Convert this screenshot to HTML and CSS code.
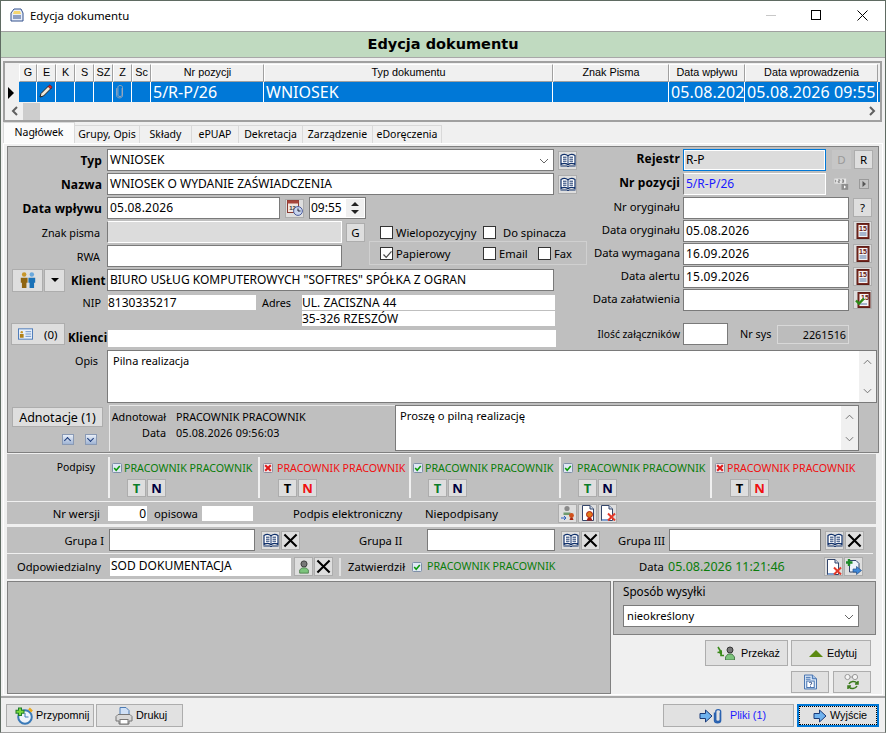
FILE: index.html
```html
<!DOCTYPE html>
<html lang="pl">
<head>
<meta charset="utf-8">
<title>Edycja dokumentu</title>
<link rel="stylesheet" href="styles.css">
</head>
<body>
<svg class="defs" width="0" height="0" aria-hidden="true">
  <symbol id="book" viewBox="0 0 16 16"><path d="M1 12.5V3.5C3 2.2 6 2.2 8 3.8C10 2.2 13 2.2 15 3.5V12.5C13 11.3 10 11.3 8 12.8C6 11.3 3 11.3 1 12.5Z" fill="#fff" stroke="#10306a" stroke-width="1.2"/><path d="M8 4V12.6M3 5.2H6.5M3 7.2H6.5M3 9.2H6.5M9.5 5.2H13M9.5 7.2H13M9.5 9.2H13" stroke="#10306a" fill="none"/><path d="M0.5 14H7L8 14.8L9 14H15.5" stroke="#10306a" fill="none"/></symbol>
  <symbol id="x" viewBox="0 0 16 16"><path d="M1.5 1.5L14.5 14.5M14.5 1.5L1.5 14.5" stroke="#000" stroke-width="2.2" fill="none"/></symbol>
  <symbol id="people" viewBox="0 0 16 16"><circle cx="4.6" cy="3" r="2" fill="#c8962a"/><path d="M1.6 6H7.6V10.5H6.6V15H2.6V10.5H1.6Z" fill="#8f6512"/><circle cx="11.4" cy="3" r="2" fill="#6aa8dc"/><path d="M8.4 6H14.4V10.5H13.4V15H9.4V10.5H8.4Z" fill="#1a72b8"/></symbol>
  <symbol id="card" viewBox="0 0 16 12"><rect x="0.5" y="0.5" width="15" height="11" fill="#e8f0fa" stroke="#4878b8"/><circle cx="4" cy="4" r="1.3" fill="#c8962a"/><path d="M2 10V6H6V10Z" fill="#b08018"/><path d="M8 3.5H14M8 6H14M8 8.5H14" stroke="#6a90c8"/></symbol>
  <symbol id="num" viewBox="0 0 18 14"><rect x="0.5" y="0.5" width="14" height="6" fill="#e8e8e8"/><path d="M2 2V5M5 2H7V3.5H5V5H7M9.5 2H11.5V5H9.5M9.5 3.5H11.5" stroke="#777" fill="none"/><rect x="9" y="7" width="8" height="7" fill="#8f8f8f"/><path d="M12 8.5L14.5 10.5L12 12.5Z" fill="#fff"/></symbol>
  <symbol id="next" viewBox="0 0 12 12"><rect x="1" y="1" width="10" height="10" fill="#9a9a9a"/><rect x="2" y="2" width="8" height="8" fill="#c4c4c4"/><path d="M4.5 3L8 6L4.5 9Z" fill="#555"/></symbol>
  <symbol id="sok" viewBox="0 0 10 10"><rect x="0.5" y="0.5" width="9" height="9" rx="1" fill="#dfe8f4" stroke="#7e8fa8"/><path d="M2.2 5L4.2 7.2L7.8 3" stroke="#0a9a0a" stroke-width="1.6" fill="none"/></symbol>
  <symbol id="sno" viewBox="0 0 10 10"><rect x="0.5" y="0.5" width="9" height="9" rx="1" fill="#f2e4e4" stroke="#8e8fa0"/><path d="M2.2 2.2L7.8 7.8M7.8 2.2L2.2 7.8" stroke="#e01818" stroke-width="2" fill="none"/></symbol>
  <symbol id="cert1" viewBox="0 0 16 16"><circle cx="7" cy="3.5" r="2.6" fill="#8a8a8a"/><path d="M3.5 10V7.5H10.5V10Z" fill="#6f9a6f"/><path d="M1 13H6M4 11L6 13L4 15" stroke="#2a5fc0" fill="none"/><circle cx="11.5" cy="10.5" r="2.4" fill="#d0501a"/><path d="M9.5 15L10.5 12.5H12.5L13.5 15Z" fill="#a82810"/></symbol>
  <symbol id="cert2" viewBox="0 0 16 16"><path d="M2.5 0.5H10L13.5 4V15.5H2.5Z" fill="#fff" stroke="#33456a"/><path d="M10 0.5V4H13.5" fill="#cfd8ea" stroke="#33456a"/><circle cx="9.5" cy="9.5" r="3" fill="#e07a18" stroke="#b01c10"/><path d="M6.5 15.5L8 12.5H11L12.5 15.5Z" fill="#b01c10"/></symbol>
  <symbol id="docx" viewBox="0 0 16 16"><path d="M1.5 0.5H9L12.5 4V15.5H1.5Z" fill="#fff" stroke="#33456a"/><path d="M9 0.5V4H12.5" fill="#cfd8ea" stroke="#33456a"/><path d="M2 15H9" stroke="#7ea0d0" stroke-width="2"/><path d="M8 8.5L15 15.5M15 8.5L8 15.5" stroke="#e43a2a" stroke-width="2" fill="none"/></symbol>
  <symbol id="docplus" viewBox="0 0 16 16"><path d="M3.5 1.5H10L13 4.5V13H3.5Z" fill="#eef3fb" stroke="#33456a"/><path d="M3 0V7M0 3.5H6.5" stroke="#1e8a2a" stroke-width="2.4"/><path d="M7 10H10.5V7.5L15.5 11.5L10.5 15.5V13H7Z" fill="#3f88d8" stroke="#24508a" stroke-width="0.7"/></symbol>
  <symbol id="user" viewBox="0 0 16 16"><circle cx="8" cy="4.5" r="3.5" fill="#777" stroke="#333"/><path d="M3 15V11.5L5.5 9H10.5L13 11.5V15Z" fill="#7cc47c" stroke="#3a6a3a" stroke-width="0.8"/></symbol>
  <symbol id="pass" viewBox="0 0 22 14"><path d="M2 1L5 6L1.5 6.5M5 6V9.5H8" stroke="#3a8a1a" stroke-width="1.6" fill="none"/><path d="M6 9L2 6.5L6 4Z" fill="#3a8a1a"/><circle cx="14" cy="4" r="3" fill="#777" stroke="#333"/><path d="M9.5 14V11L12 8H16L18.5 11V14Z" fill="#7cc47c" stroke="#3a6a3a" stroke-width="0.8"/></symbol>
  <symbol id="help" viewBox="0 0 14 16"><path d="M0.5 0.5H9L13.5 4.5V15.5H0.5Z" fill="#dbe8f8" stroke="#3a6aaa"/><path d="M9 0.5V4.5H13.5" fill="#a8c4e8" stroke="#3a6aaa"/><path d="M2 3H7M2 5H7" stroke="#3a6aaa"/><rect x="3" y="7" width="8" height="7" fill="#fff" stroke="#3a6aaa"/><path d="M5.5 9C5.5 8 8.5 8 8.5 9.2C8.5 10.2 7 10.2 7 11.2M7 12V13" stroke="#1a3a7a" fill="none"/></symbol>
  <symbol id="glass" viewBox="0 0 16 16"><circle cx="3.5" cy="3" r="2.6" fill="#f4f4f4" stroke="#999"/><circle cx="11" cy="3" r="2.6" fill="#f4f4f4" stroke="#999"/><path d="M6 3H8.5" stroke="#999"/><path d="M5 10C6 7 11 6.5 13 9M14 7V10H11" stroke="#3a7a1a" stroke-width="1.5" fill="none"/><path d="M13 12C11.5 15 7 15.5 5 13M4 15V12H7" stroke="#3a7a1a" stroke-width="1.5" fill="none"/></symbol>
  <symbol id="alarm" viewBox="0 0 18 18"><circle cx="10" cy="10" r="6.8" fill="#eef3fa" stroke="#3a7ab8" stroke-width="2"/><path d="M10 6V10H13.5" stroke="#3a7ab8" fill="none"/><path d="M14 1.5L17 4.5" stroke="#e8a820" stroke-width="2.5"/><path d="M5 0.5V9M0.5 4.8H9.5" stroke="#1e7e2a" stroke-width="4"/><path d="M5 1.5V8M1.5 4.8H8.5" stroke="#7cd83c" stroke-width="2"/></symbol>
  <symbol id="printer" viewBox="0 0 18 18"><path d="M5 0.5H11L14 3.5V8H5Z" fill="#cfe0f6" stroke="#4e7cb4"/><path d="M1 14V9.5L3 7.5H15L17 9.5V14H14V17H4V14Z" fill="#d8d8d8" stroke="#777"/><rect x="5" y="12.5" width="8" height="4.5" fill="#fff" stroke="#777"/></symbol>
  <symbol id="arrow" viewBox="0 0 14 14"><path d="M1 4.5H6.5V1L13 7L6.5 13V9.5H1Z" fill="#6fb2ee" stroke="#1a3a78"/></symbol>
  <symbol id="clip" viewBox="0 0 10 18"><path d="M7.5 5V13.5C7.5 15.5 2.5 15.5 2.5 13.5V4C2.5 1 8 1 8 4V14C8 17.5 1 17.5 1 14V5" stroke="#2a62b0" stroke-width="1.5" fill="none"/></symbol>
  <symbol id="tick" viewBox="0 0 13 13"><path d="M2.5 6.5L5.2 9.4L10.5 3.4" stroke="#4a4a4a" stroke-width="1.2" fill="none"/></symbol>
  <symbol id="chev" viewBox="0 0 10 6"><path d="M1 1L5 5L9 1" stroke="#666" fill="none"/></symbol>
  <symbol id="sbl" viewBox="0 0 8 10"><path d="M6 1L2 5L6 9" stroke="#606060" stroke-width="2" fill="none"/></symbol>
  <symbol id="sbr" viewBox="0 0 8 10"><path d="M2 1L6 5L2 9" stroke="#606060" stroke-width="2" fill="none"/></symbol>
</svg>

<div class="window">
  <header class="titlebar">
    <svg class="app-icon" viewBox="0 0 14 14"><path d="M1 5L4 1H11L13 5V13H1Z" fill="#e8eefa" stroke="#32508c"/><path d="M4 3H10L11 6H3Z" fill="#f5d670"/><path d="M3 8H11M3 10H11" stroke="#32508c"/></svg>
    <span class="app-title">Edycja dokumentu</span>
    <span class="win-min"></span>
    <span class="win-max"></span>
    <svg class="win-close" viewBox="0 0 11 11"><path d="M0.5 0.5L10.5 10.5M10.5 0.5L0.5 10.5" stroke="#000" fill="none"/></svg>
  </header>

  <h1 class="banner">Edycja dokumentu</h1>

  <section class="grid">
    <div class="grow ghead">
      <span class="corner"></span><span>G</span><span>E</span><span>K</span><span>S</span><span>SZ</span><span>Z</span><span>Sc</span><span>Nr pozycji</span><span>Typ dokumentu</span><span>Znak Pisma</span><span>Data wpływu</span><span>Data wprowadzenia</span>
    </div>
    <div class="grow gdata">
      <span class="gmark"><i class="gtri"></i></span><span></span>
      <span class="gicon"><svg class="ic14" viewBox="0 0 14 14"><path d="M1 13L2 9.5L9.5 2L12 4.5L4.5 12Z" fill="#f0e8d8" stroke="#222"/><path d="M9 2.5L11 0.8L13.2 3L11.5 5Z" fill="#e02020" stroke="#601010" stroke-width="0.6"/></svg></span>
      <span></span><span></span><span></span>
      <span class="gicon"><svg class="ic-clip" viewBox="0 0 10 18"><path d="M7.5 5V13.5C7.5 15.5 2.5 15.5 2.5 13.5V4C2.5 1 8 1 8 4V14C8 17.5 1 17.5 1 14V5" stroke="#98a8bc" stroke-width="1.2" fill="none"/></svg></span>
      <span></span><span>5/R-P/26</span><span>WNIOSEK</span><span></span><span class="clip-cell">05.08.2026</span><span class="clip-cell">05.08.2026 09:55</span>
    </div>
    <div class="gscroll">
      <svg class="sb-l"><use href="#sbl"/></svg><span class="sb-thumb"></span><svg class="sb-r"><use href="#sbr"/></svg>
    </div>
  </section>

  <nav class="tabs">
    <span class="tab tab-active">Nagłówek</span><span class="tab t65">Grupy, Opis</span><span class="tab t52">Składy</span><span class="tab t47">ePUAP</span><span class="tab t64">Dekretacja</span><span class="tab t70">Zarządzenie</span><span class="tab t69">eDoręczenia</span>
  </nav>

  <main class="page">
    <section class="top">
      <div class="left">
        <div class="row">
          <label class="lab b">Typ</label>
          <div class="fld w447">WNIOSEK<svg class="chev" viewBox="0 0 10 6"><use href="#chev"/></svg></div>
          <button class="tb ml4"><svg class="ic16"><use href="#book"/></svg></button>
        </div>
        <div class="row">
          <label class="lab b">Nazwa</label>
          <div class="fld w447">WNIOSEK O WYDANIE ZAŚWIADCZENIA</div>
          <button class="tb ml4"><svg class="ic16"><use href="#book"/></svg></button>
        </div>
        <div class="row">
          <label class="lab b">Data wpływu</label>
          <div class="fld w173 dt">05.08.2026</div>
          <button class="tb ml5"><svg class="ic16" viewBox="0 0 16 16"><rect x="0.5" y="0.5" width="11" height="12" fill="#f2e6e0" stroke="#8a3a32"/><rect x="0.5" y="0.5" width="11" height="3" fill="#a8443a"/><text x="5.5" y="10" font-size="6" font-weight="700" text-anchor="middle" fill="#333" font-family="Liberation Sans">12</text><circle cx="11" cy="11" r="4.4" fill="#c8d4ee" stroke="#4a5a9a"/><path d="M11 8.5V11H13.5" stroke="#223" fill="none"/></svg></button>
          <div class="fld time ml5">09:55<span class="spin"><i class="up"></i><i class="down"></i></span></div>
        </div>
        <div class="row">
          <label class="lab">Znak pisma</label>
          <div class="fld ro w235"></div>
          <button class="tb ml4">G</button>
          <span class="cb ml15"></span><span class="cbt w87">Wielopozycyjny</span>
          <span class="cb"></span><span class="cbt ml7">Do spinacza</span>
        </div>
        <div class="row">
          <label class="lab">RWA</label>
          <div class="fld w235"></div>
          <div class="gbox">
            <span class="cb"><svg class="ic13"><use href="#tick"/></svg></span><span class="cbt w87">Papierowy</span>
            <span class="cb"></span><span class="cbt w39">Email</span>
            <span class="cb"></span><span class="cbt">Fax</span>
          </div>
        </div>
        <div class="row">
          <div class="lead">
            <button class="tb tb-people"><svg class="ic18"><use href="#people"/></svg></button>
            <button class="tb tb-drop"><i class="drop"></i></button>
            <label class="b lead-lab">Klient</label>
          </div>
          <div class="fld w447">BIURO USŁUG KOMPUTEROWYCH "SOFTRES" SPÓŁKA Z OGRAN</div>
        </div>
        <div class="row flat r1">
          <label class="lab lab-nip">NIP</label>
          <div class="val w148">8130335217</div>
          <label class="adres">Adres</label>
          <div class="val w253">UL. ZACISZNA 44</div>
        </div>
        <div class="row flat r2">
          <div class="val w253 addr2">35-326 RZESZÓW</div>
        </div>
        <div class="row flat r3">
          <div class="lead">
            <button class="tb tb-card"><svg class="ic-card"><use href="#card"/></svg><span>(0)</span></button>
            <label class="b lead-lab2">Klienci</label>
          </div>
          <div class="val w448 k"></div>
        </div>
      </div>
      <div class="right">
        <div class="rrow h24"><label class="rlab b">Rejestr</label><div class="fld ro focus w143">R-P</div><button class="tb ml6 dim">D</button><button class="tb ml3">R</button></div>
        <div class="rrow h24"><label class="rlab b">Nr pozycji</label><div class="fld ro w143 blue">5/R-P/26</div><button class="tb ml6 plain"><svg class="ic-num"><use href="#num"/></svg></button><button class="tb ml3 plain"><svg class="ic12"><use href="#next"/></svg></button></div>
        <div class="rrow h23"><label class="rlab">Nr oryginału</label><div class="fld w166"></div><button class="tb ml4">?</button></div>
        <div class="rrow h23"><label class="rlab">Data oryginału</label><div class="fld w166 dt">05.08.2026</div><button class="tb ml4"><svg class="ic16" viewBox="0 0 16 16"><rect x="2" y="0.5" width="12" height="15" fill="#7a2a22" stroke="#5c1c16"/><rect x="3.5" y="2" width="9" height="12" fill="#f4f4f4"/><text x="8" y="8" font-size="7" font-weight="700" text-anchor="middle" fill="#6a1a14" font-family="Liberation Sans">15</text><path d="M4.5 10H11.5M4.5 12H11.5" stroke="#5878a8"/></svg></button></div>
        <div class="rrow h23"><label class="rlab">Data wymagana</label><div class="fld w166 dt">16.09.2026</div><button class="tb ml4"><svg class="ic16" viewBox="0 0 16 16"><rect x="2" y="0.5" width="12" height="15" fill="#7a2a22" stroke="#5c1c16"/><rect x="3.5" y="2" width="9" height="12" fill="#f4f4f4"/><text x="8" y="8" font-size="7" font-weight="700" text-anchor="middle" fill="#6a1a14" font-family="Liberation Sans">15</text><path d="M4.5 10H11.5M4.5 12H11.5" stroke="#5878a8"/></svg></button></div>
        <div class="rrow h23"><label class="rlab">Data alertu</label><div class="fld w166 dt">15.09.2026</div><button class="tb ml4"><svg class="ic16" viewBox="0 0 16 16"><rect x="2" y="0.5" width="12" height="15" fill="#7a2a22" stroke="#5c1c16"/><rect x="3.5" y="2" width="9" height="12" fill="#f4f4f4"/><text x="8" y="8" font-size="7" font-weight="700" text-anchor="middle" fill="#6a1a14" font-family="Liberation Sans">15</text><path d="M4.5 10H11.5M4.5 12H11.5" stroke="#5878a8"/></svg></button></div>
        <div class="rrow h34"><label class="rlab">Data załatwienia</label><div class="fld w166">&nbsp;</div><button class="tb ml4"><svg class="ic16" viewBox="0 0 16 16"><rect x="3" y="0.5" width="12" height="15" fill="#7a2a22" stroke="#5c1c16"/><rect x="4.5" y="2" width="9" height="12" fill="#f4f4f4"/><text x="10" y="8" font-size="7" font-weight="700" text-anchor="middle" fill="#6a1a14" font-family="Liberation Sans">15</text><path d="M5 12H12" stroke="#5878a8"/><path d="M1 8.5L4 11.5L9 6.5" stroke="#2c8a16" stroke-width="2.4" fill="none"/></svg></button></div>
        <div class="rrow h24"><label class="rlab small">Ilość załączników</label><div class="fld w45"></div><label class="nrsys">Nr sys</label><div class="sysval">2261516</div></div>
      </div>
    </section>

    <section class="opis">
      <label class="lab lab-opis">Opis</label>
      <div class="area area-opis">Pilna realizacja<span class="vsb"><svg class="up-ch" viewBox="0 0 10 6"><use href="#chev"/></svg><svg class="dn-ch" viewBox="0 0 10 6"><use href="#chev"/></svg></span></div>
    </section>

    <section class="annot">
      <div class="annot-left">
        <button class="tb btn-annot">Adnotacje (1)</button>
        <div class="minis"><i class="mini mini-up"></i><i class="mini mini-dn"></i></div>
      </div>
      <div class="annot-info">
        <span class="ai-l">Adnotował</span><span>PRACOWNIK PRACOWNIK</span>
        <span class="ai-l">Data</span><span class="ai-d">05.08.2026 09:56:03</span>
      </div>
      <div class="area area-annot">Proszę o pilną realizację<span class="vsb"><svg class="up-ch" viewBox="0 0 10 6"><use href="#chev"/></svg><svg class="dn-ch" viewBox="0 0 10 6"><use href="#chev"/></svg></span></div>
    </section>

    <section class="signs">
      <label class="signs-lab">Podpisy</label>
      <div class="sig s1">
        <div class="sig-top"><svg class="ic10"><use href="#sok"/></svg><span class="ok">PRACOWNIK PRACOWNIK</span></div>
        <div class="sig-btns"><button class="tb tb-t"><b class="t-ok">T</b></button><button class="tb tb-t"><b class="n-bl">N</b></button></div>
      </div>
      <div class="sig s2">
        <div class="sig-top"><svg class="ic10"><use href="#sno"/></svg><span class="no">PRACOWNIK PRACOWNIK</span></div>
        <div class="sig-btns"><button class="tb tb-t"><b class="t-bk">T</b></button><button class="tb tb-t"><b class="n-red">N</b></button></div>
      </div>
      <div class="sig s3">
        <div class="sig-top"><svg class="ic10"><use href="#sok"/></svg><span class="ok">PRACOWNIK PRACOWNIK</span></div>
        <div class="sig-btns"><button class="tb tb-t"><b class="t-ok">T</b></button><button class="tb tb-t"><b class="n-bl">N</b></button></div>
      </div>
      <div class="sig s4">
        <div class="sig-top"><svg class="ic10"><use href="#sok"/></svg><span class="ok">PRACOWNIK PRACOWNIK</span></div>
        <div class="sig-btns"><button class="tb tb-t"><b class="t-ok">T</b></button><button class="tb tb-t"><b class="n-bl">N</b></button></div>
      </div>
      <div class="sig s5">
        <div class="sig-top"><svg class="ic10"><use href="#sno"/></svg><span class="no">PRACOWNIK PRACOWNIK</span></div>
        <div class="sig-btns"><button class="tb tb-t"><b class="t-bk">T</b></button><button class="tb tb-t"><b class="n-red">N</b></button></div>
      </div>
    </section>

    <section class="version">
      <label class="v-lab">Nr wersji</label>
      <div class="val v-num">0</div>
      <label class="v-op">opisowa</label>
      <div class="val v-desc"></div>
      <label class="v-pe">Podpis elektroniczny</label>
      <span class="v-np">Niepodpisany</span>
      <button class="tb v-b1"><svg class="ic16"><use href="#cert1"/></svg></button>
      <button class="tb v-b2"><svg class="ic16"><use href="#cert2"/></svg></button>
      <button class="tb v-b2"><svg class="ic16"><use href="#docx"/></svg></button>
    </section>

    <section class="groups">
      <div class="g-row">
        <label class="g1-lab">Grupa I</label>
        <div class="fld g1">&nbsp;</div>
        <button class="tb ml6"><svg class="ic16"><use href="#book"/></svg></button><button class="tb ml1"><svg class="ic15"><use href="#x"/></svg></button>
        <label class="g2-lab">Grupa II</label>
        <div class="fld g2">&nbsp;</div>
        <button class="tb ml6"><svg class="ic16"><use href="#book"/></svg></button><button class="tb ml1"><svg class="ic15"><use href="#x"/></svg></button>
        <label class="g3-lab">Grupa III</label>
        <div class="fld g3">&nbsp;</div>
        <button class="tb ml4"><svg class="ic16"><use href="#book"/></svg></button><button class="tb ml1"><svg class="ic15"><use href="#x"/></svg></button>
      </div>
      <div class="o-row">
        <label class="o-lab">Odpowiedzialny</label>
        <div class="val o-val">SOD DOKUMENTACJA</div>
        <button class="tb ml3"><svg class="ic14"><use href="#user"/></svg></button><button class="tb ml1"><svg class="ic15"><use href="#x"/></svg></button>
        <i class="vsep"></i>
        <label class="z-lab">Zatwierdził</label>
        <svg class="ic10 z-ic"><use href="#sok"/></svg>
        <span class="ok z-name">PRACOWNIK PRACOWNIK</span>
        <label class="d-lab">Data</label>
        <span class="ok d-val">05.08.2026 11:21:46</span>
        <button class="tb"><svg class="ic16"><use href="#docx"/></svg></button><button class="tb ml1"><svg class="ic16"><use href="#docplus"/></svg></button>
      </div>
    </section>

    <section class="lower">
      <div class="blank"></div>
      <div class="side">
        <div class="send">
          <label class="send-lab">Sposób wysyłki</label>
          <div class="fld send-sel">nieokreślony<svg class="chev" viewBox="0 0 10 6"><use href="#chev"/></svg></div>
        </div>
        <div class="actions">
          <button class="act act-p"><svg class="ic-pass"><use href="#pass"/></svg>Przekaż</button>
          <button class="act act-e"><i class="tri-up"></i>Edytuj</button>
        </div>
        <div class="actions2">
          <button class="act act-s"><svg class="ic-help"><use href="#help"/></svg></button>
          <button class="act act-s"><svg class="ic-glass"><use href="#glass"/></svg></button>
        </div>
      </div>
    </section>
  </main>

  <footer class="footer">
    <button class="act f1"><svg class="ic18"><use href="#alarm"/></svg>Przypomnij</button>
    <button class="act f2"><svg class="ic18"><use href="#printer"/></svg>Drukuj</button>
    <span class="spacer"></span>
    <button class="act f3"><svg class="ic14"><use href="#arrow"/></svg><svg class="ic-fclip"><use href="#clip"/></svg><span class="pl">Pliki (1)</span></button>
    <button class="act f4"><svg class="ic14"><use href="#arrow"/></svg>Wyjście</button>
  </footer>
</div>
</body>
</html>
```

FILE: styles.css
```css
* { box-sizing: border-box; }
html, body { margin: 0; padding: 0; }
body { width: 886px; height: 733px; overflow: hidden; background: #f0f0f0; }
.defs { display: block; height: 0; }
.window {
  width: 886px; height: 733px; overflow: hidden;
  border: 1px solid #5f6b62; border-bottom-color: #a0a0a0;
  background: #f0f0f0; color: #000;
  font: 10.8px/15px "Noto Sans", Tahoma, sans-serif;
}
label { display: block; white-space: nowrap; }
button { font: inherit; color: inherit; padding: 0; margin: 0; white-space: nowrap; }
svg { display: block; flex: none; }
.ic10 { width: 10px; height: 10px; }
.ic12 { width: 12px; height: 12px; }
.ic13 { width: 13px; height: 13px; }
.ic14 { width: 14px; height: 14px; }
.ic15 { width: 15px; height: 15px; }
.ic16 { width: 16px; height: 16px; }
.ic18 { width: 18px; height: 18px; }

.titlebar { height: 31px; background: #fff; border-bottom: 1px solid #a0a0a0; display: flex; align-items: center; padding: 0 0 2px 9px; }
.app-icon { width: 14px; height: 14px; }
.app-title { margin-left: 6px; flex: 1; font-size: 11.4px; }
.win-min { width: 10px; height: 1px; background: #c8c8c8; margin-right: 35px; }
.win-max { width: 10px; height: 10px; border: 1px solid #000; margin-right: 36px; }
.win-close { width: 11px; height: 11px; margin-right: 17px; }

.banner { margin: 0; height: 26px; background: #c0dac0; border-bottom: 1px solid #a8a8a8; font: 700 14.5px/25px "DejaVu Sans", sans-serif; text-align: center; }

.grid { margin: 3px 3px 0 2px; height: 61px; border: 2px solid #a0a0a0; background: #f0f0f0; }
.grow { display: grid; grid-template-columns: 14px 18px 19px 19px 19px 19px 19px 19px 113px 289px 116px 76px 133px; }
.ghead { height: 19px; padding-top: 1px; }
.ghead span { background: #f0f0f0; border: 1px solid; border-color: #fff #a0a0a0 #a0a0a0 #fff; text-align: center; font: 10.8px/15px "Liberation Sans", Arial, sans-serif; overflow: hidden; white-space: nowrap; }
.ghead .corner { border-color: transparent; }
.gdata { height: 20px; background: #0078d7; color: #fff; font-size: 16px; line-height: 21px; }
.gdata span { border-right: 1px solid #fff; padding-left: 2px; overflow: hidden; white-space: nowrap; }
.clip-cell { letter-spacing: 0.1px; }
.gdata .gmark { background: #f0f0f0; border-right: 0; padding: 5px 0 0 3px; }
.gtri { display: block; width: 0; height: 0; border: 6px solid transparent; border-left: 6px solid #000; border-right: 0; }
.gdata .gicon { padding: 2px 0 0 2px; }
.ic-clip { width: 10px; height: 15px; }
.gscroll { height: 18px; display: flex; align-items: center; padding-left: 6px; }
.sb-l, .sb-r { width: 8px; height: 10px; }
.sb-thumb { width: 17px; height: 17px; background: #cdcdcd; margin-left: 4px; }
.sb-r { margin-left: auto; margin-right: 4px; }

.tabs { height: 21px; margin-left: 2px; display: flex; align-items: flex-end; background: #f0f0f0; font-size: 10.5px; }
.tab { height: 18px; border: 1px solid #d9d9d9; border-left: 0; border-bottom: 0; text-align: center; line-height: 17px; background: #f0f0f0; flex: none; white-space: nowrap; }
.tab-active { width: 72px; height: 21px; background: #fbfbfb; border-left: 1px solid #d9d9d9; line-height: 19px; }
.t65 { width: 65px; } .t52 { width: 52px; } .t47 { width: 47px; } .t64 { width: 64px; } .t70 { width: 70px; } .t69 { width: 69px; }

.page { margin: 0 2px; height: 552px; border: 1px solid #fff; padding: 2px 3px 1px 3px; }
.top { height: 204px; display: flex; background: #bfbfbf; border: 1px solid #808080; border-bottom: 0; padding-top: 2px; }
.left { width: 582px; flex: none; }
.right { flex: 1; }

.row { display: flex; align-items: center; height: 22px; margin-bottom: 2px; }
.lab { width: 94px; margin-right: 5px; text-align: right; flex: none; }
.lab:not(.b) { padding-right: 2px; }
.b { font-weight: 700; font-size: 12px; letter-spacing: 0.15px; }
.fld { height: 22px; background: #fff; border: 1px solid #7a7a7a; padding: 0 2px; font-size: 12px; line-height: 20px; position: relative; white-space: nowrap; flex: none; }
.dt { letter-spacing: 0.2px; }
.ro { background: #dcdcdc; border-color: #fff #fff #fff #7a7a7a; }
.focus { border: 1px solid #0078d7; box-shadow: inset 0 0 0 1px #fff; }
.blue { color: #1a1aff; }
.w447 { width: 447px; } .w173 { width: 173px; } .w235 { width: 235px; } .w143 { width: 143px; } .w166 { width: 166px; } .w45 { width: 45px; }
.w148 { width: 148px; } .w253 { width: 253px; } .w448 { width: 448px; } .w87 { width: 87px; } .w39 { width: 39px; }
.chev { position: absolute; right: 4px; top: 8px; width: 10px; height: 6px; }
.tb { width: 19px; height: 19px; background: #dedede; border: 1px solid #adadad; display: flex; align-items: center; justify-content: center; flex: none; line-height: 15px; font-size: 11.5px; }
.plain { background: #bfbfbf; border-color: #bfbfbf; }
.dim { color: #9a9a9a; background: #c6c6c6; border-color: #c6c6c6; }
.ml1 { margin-left: 1px; } .ml3 { margin-left: 3px; } .ml4 { margin-left: 4px; } .ml5 { margin-left: 5px; } .ml6 { margin-left: 6px; } .ml15 { margin-left: 15px; }
.time { width: 57px; padding: 0 0 0 1px; }
.spin { position: absolute; right: 1px; top: 1px; bottom: 1px; width: 18px; background: #f0f0f0; display: flex; flex-direction: column; justify-content: center; gap: 4px; align-items: center; }
.spin i { display: block; width: 0; height: 0; border: 4px solid transparent; border-top: 0; border-bottom: 4px solid #222; }
.spin .down { border-bottom: 0; border-top: 4px solid #222; }
.cb { width: 13px; height: 13px; background: #fff; border: 1px solid #333; flex: none; }
.cbt { margin-left: 3px; flex: none; font-size: 11.2px; white-space: nowrap; }
.cbt.ml7 { margin-left: 7px; }
.gbox { display: flex; align-items: center; width: 218px; height: 24px; margin-left: 27px; align-self: flex-start; margin-top: -4px; padding-left: 10px; border: 1px solid #d0d0d0; }
.lead { width: 99px; display: flex; align-items: center; flex: none; padding-left: 4px; }
.tb-people { width: 31px; height: 23px; }
.tb-drop { width: 21px; height: 23px; margin-left: 1px; }
.drop { display: block; width: 0; height: 0; border: 4px solid transparent; border-bottom: 0; border-top: 4px solid #000; }
.lead-lab { margin-left: 6px; font-size: 11.5px; }
.flat { height: 16px; }
.val { background: #fff; height: 15px; font-size: 12px; line-height: 15px; flex: none; white-space: nowrap; }
.r1 { margin-top: 3px; margin-bottom: 1px; }
.r1 .lab-nip { margin-right: 7px; padding-right: 0; }
.lab-nip { width: 93px; }
.adres { margin-left: 6px; width: 40px; flex: none; }
.r2 { height: 15px; margin-bottom: 4px; }
.addr2 { margin-left: 294px; }
.r3 { height: 17px; }
.r3 .val { height: 17px; }
.r3 .k { margin-left: 1px; }
.r3 .lead { padding-left: 3px; align-self: flex-start; margin-top: -7px; }
.tb-card { width: 54px; height: 22px; justify-content: flex-start; padding-left: 6px; }
.tb-card span { margin-left: 11px; }
.ic-card { width: 15px; height: 12px; }
.lead-lab2 { margin: 7px 0 0 3px; font-size: 11.5px; }

.rrow { display: flex; align-items: flex-start; }
.h24 { height: 24px; } .h23 { height: 23px; } .h34 { height: 34px; }
.rlab { width: 93px; text-align: right; flex: none; line-height: 20px; padding-right: 3px; font-size: 11.3px; }
.rlab.b { font-size: 12px; }
.rrow .fld { height: 22px; }
.rrow .tb { margin-top: 1px; }
.rrow .rlab.small { font-size: 10.3px; line-height: 22px; }
.ic-num { width: 15px; height: 12px; }
.nrsys { margin-left: 12px; width: 37px; flex: none; line-height: 22px; }
.sysval { width: 72px; height: 19px; margin-top: 2px; background: #bcbcbc; border: 1px solid #d8d8d8; text-align: right; padding-right: 2px; line-height: 17px; }

.opis { height: 55px; display: flex; background: #bfbfbf; border-left: 1px solid #808080; border-right: 1px solid #808080; }
.lab-opis { margin-right: 7px; width: 92px; margin-top: 3px; }
.area { position: relative; background: #fff; border: 1px solid #7a7a7a; padding: 2px 5px; height: 53px; flex: none; white-space: nowrap; font-size: 11px; }
.area-opis { width: 770px; }
.vsb { position: absolute; top: 0; right: 0; bottom: 0; width: 17px; background: #f0f0f0; }
.up-ch { position: absolute; left: 4px; top: 8px; width: 9px; height: 6px; transform: scaleY(-1); }
.dn-ch { position: absolute; left: 4px; bottom: 8px; width: 9px; height: 6px; }

.annot { height: 48px; display: flex; background: #bfbfbf; border: 1px solid #808080; border-top: 0; border-bottom: 1px solid #808080; }
.annot-left { width: 101px; padding: 2px 0 0 4px; flex: none; }
.btn-annot { width: 91px; height: 20px; font-size: 12.5px; }
.minis { display: flex; gap: 11px; margin: 7px 0 0 50px; }
.mini { width: 12px; height: 11px; background: #e4ecf8 linear-gradient(#e8eef8,#9fb4d4); border: 1px solid #8a9ab4; position: relative; }
.mini-up::after, .mini-dn::after { content: ""; position: absolute; left: 2px; width: 4px; height: 4px; border: 1px solid #1a3a7a; border-width: 1px 0 0 1px; transform: rotate(45deg); top: 3px; }
.mini-dn::after { transform: rotate(225deg); top: 1px; }
.annot-info { width: 286px; height: 46px; border-left: 1px solid #e8e8e8; border-top: 1px solid #e8e8e8; display: grid; grid-template-columns: 56px 1fr; column-gap: 10px; grid-auto-rows: 16px; align-content: start; padding-top: 3px; }
.ai-l { text-align: right; }
.ai-d { letter-spacing: 0.15px; }
.area-annot { width: 464px; height: 46px; padding: 2px 4px; font-size: 11.2px; }

.signs { margin-top: 1px; height: 48px; width: 869px; background: #bfbfbf; display: flex; border-bottom: 1px solid #f0f0f0; }
.signs-lab { width: 101px; flex: none; text-align: right; padding: 6px 13px 0 0; font-size: 10.4px; }
.sig { border-left: 2px solid #f0f0f0; height: 41px; margin-top: 3px; padding-top: 3px; flex: none; }
.s1 { width: 150px; padding-left: 2px; } .s2 { width: 151px; padding-left: 3px; } .s3 { width: 150px; padding-left: 2px; } .s4 { width: 151px; padding-left: 2px; } .s5 { padding-left: 3px; width: 150px; }
.sig-top { display: flex; align-items: center; height: 16px; gap: 2px; white-space: nowrap; }
.s2 .sig-top, .s4 .sig-top { gap: 4px; }
.sig-btns { display: flex; gap: 1px; margin: 3px 0 0 15px; }
.tb-t { height: 18px; font-size: 13px; }
.ok, .no { font-size: 10.7px; }
.ok { color: #0a7d0a; } .no { color: #f01010; }
.t-ok { color: #0a7d2a; } .n-bl { color: #000040; } .t-bk { color: #000; } .n-red { color: #f01010; }

.version { height: 22px; width: 869px; background: #bfbfbf; display: flex; align-items: center; font-size: 11.3px; }
.v-lab { width: 93px; text-align: right; flex: none; }
.v-num { width: 39px; margin-left: 8px; height: 15px; text-align: right; padding-right: 1px; }
.v-op { margin-left: 7px; width: 44px; flex: none; }
.v-desc { width: 51px; margin-left: 4px; }
.v-pe { margin-left: 40px; width: 116px; flex: none; }
.v-np { margin-left: 16px; width: 133px; flex: none; white-space: nowrap; }
.v-b2 { margin-left: 1px; }

.groups { margin-top: 3px; height: 52px; width: 869px; background: #bfbfbf; font-size: 11.2px; }
.g-row { height: 27px; display: flex; align-items: center; border-bottom: 1px solid #f0f0f0; margin-right: 3px; }
.g1-lab { width: 97px; text-align: right; margin-right: 5px; flex: none; }
.g1 { width: 146px; } .g2 { width: 128px; } .g3 { width: 152px; }
.g2-lab { margin-left: 59px; width: 68px; flex: none; }
.g3-lab { margin-left: 18px; width: 51px; flex: none; }
.o-row { height: 25px; display: flex; align-items: center; }
.o-lab { width: 94px; margin-left: 10px; flex: none; }
.o-val { width: 181px; height: 18px; line-height: 16px; margin-left: -1px; padding-left: 1px; }
.vsep { width: 2px; height: 18px; background: #e0e0e0; margin: 0 7px 0 6px; flex: none; }
.z-lab { width: 64px; flex: none; }
.z-ic { margin-right: 5px; }
.z-name { width: 212px; flex: none; white-space: nowrap; }
.d-lab { width: 29px; flex: none; }
.d-val { width: 156px; flex: none; font-size: 12.5px; white-space: nowrap; }

.lower { margin-top: 2px; display: flex; height: 113px; }
.blank { width: 604px; background: #bfbfbf; border: 1px solid #808080; flex: none; }
.side { margin-left: 2px; width: 263px; }
.send { height: 54px; background: #bfbfbf; border: 1px solid #808080; padding: 2px 0 0 9px; }
.send-lab { line-height: 15px; font-size: 11.7px; }
.send-sel { width: 236px; margin-top: 6px; height: 22px; font-size: 11.2px; padding-left: 3px; }
.actions { display: flex; margin: 5px 0 0 92px; gap: 3px; }
.actions2 { display: flex; margin: 5px 0 0 178px; gap: 4px; }
.act { background: #e1e1e1; border: 1px solid #adadad; display: flex; align-items: center; justify-content: flex-start; flex: none; font: 10.8px/15px "Liberation Sans", Arial, sans-serif; }
.act-p { width: 83px; height: 26px; gap: 3px; padding-left: 10px; }
.act-e { width: 80px; height: 26px; gap: 4px; padding-left: 17px; }
.act-s { width: 38px; height: 22px; justify-content: center; }
.tri-up { width: 0; height: 0; border: 7px solid transparent; border-top: 0; border-bottom: 7px solid #5c8a12; }
.ic-pass { width: 22px; height: 14px; }
.ic-help { width: 13px; height: 16px; }
.ic-glass { width: 16px; height: 16px; }

.footer { height: 36px; margin-top: 1px; border-top: 2px solid #a8a8a8; display: flex; align-items: flex-start; padding: 6px 0 0 5px; }
.f1 { width: 88px; height: 23px; margin-right: 2px; gap: 3px; padding-left: 8px; }
.f2 { width: 87px; height: 23px; gap: 3px; padding-left: 18px; }
.spacer { width: 480px; flex: none; }
.f3 { width: 131px; height: 23px; padding-left: 35px; }
.ic-fclip { width: 10px; height: 16px; }
.pl { color: #1a1aff; margin-left: 7px; }
.f4 { width: 82px; height: 23px; margin-left: 3px; gap: 3px; padding-left: 14px; border: 2px solid #0078d7; outline: 1px dotted #000; outline-offset: -3px; }
```
